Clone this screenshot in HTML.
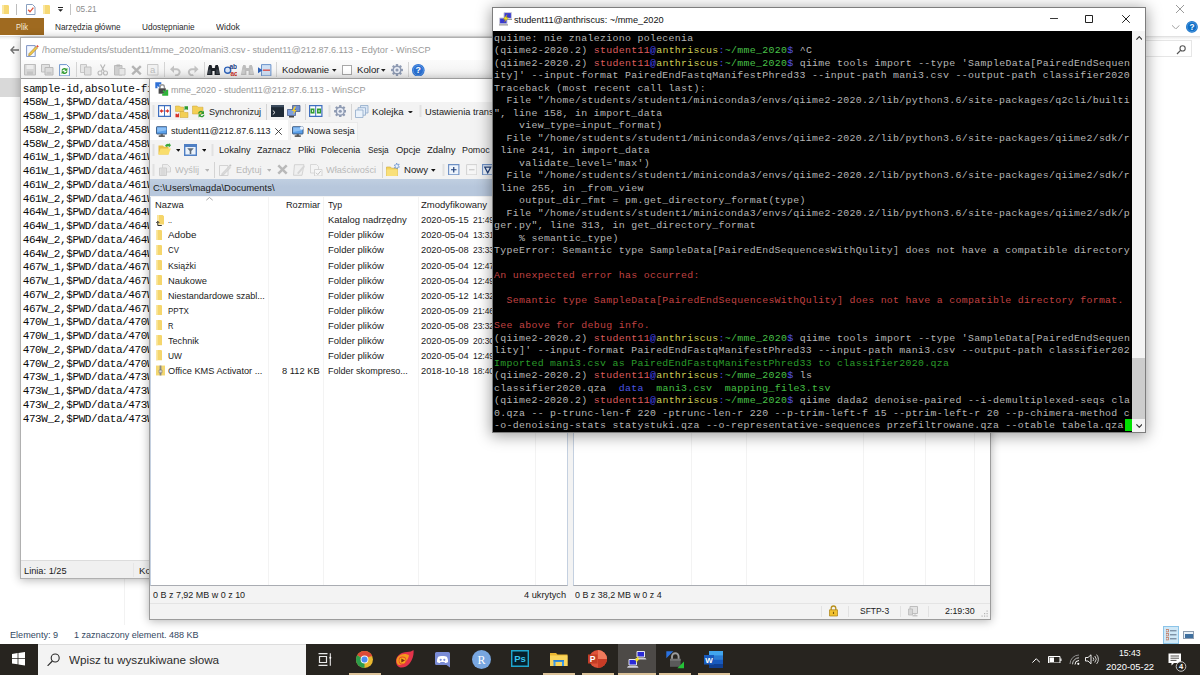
<!DOCTYPE html>
<html lang="pl">
<head>
<meta charset="utf-8">
<title>Pulpit - WinSCP / PuTTY</title>
<style>
html,body{margin:0;padding:0}
body{width:1200px;height:675px;overflow:hidden;position:relative;background:#fff;font-family:'Liberation Sans',sans-serif;font-size:9.4px}
div,span,svg,pre{position:absolute;box-sizing:border-box}
span{white-space:pre;transform-origin:0 50%}
pre{margin:0;font-family:'Liberation Mono',monospace;white-space:pre}
pre i{font-style:normal;position:static}
.w{overflow:hidden}
</style>
</head>
<body>
<div style="left:0px;top:0px;width:1200px;height:644px;background:#fff;"></div>
<svg style="left:1.5px;top:4.5px;" width="7.5" height="9.5" viewBox="0 0 7.5 9.5"><path d="M0 0h6l1.5 1.2V9.5H0z" fill="#f6d873"/><path d="M0 0h2v9.5H0z" fill="#fbe7a0"/></svg>
<div style="left:16px;top:4px;width:1px;height:10.5px;background:#bdbdbd;"></div>
<svg style="left:26px;top:3.5px;" width="9.5" height="11" viewBox="0 0 9.5 11"><path d="M.5.5h6l2.5 2.5v7.5H.5z" fill="#fff" stroke="#8aa0c0" stroke-width="1"/><path d="M2.2 5.8 4 7.8 7.4 3.6" fill="none" stroke="#e0523a" stroke-width="1.3"/></svg>
<svg style="left:42.5px;top:4.5px;" width="7.5" height="9.5" viewBox="0 0 7.5 9.5"><path d="M0 0h6l1.5 1.2V9.5H0z" fill="#f6d873"/><path d="M0 0h2v9.5H0z" fill="#fbe7a0"/></svg>
<svg style="left:57.8px;top:7.3px;" width="5" height="5" viewBox="0 0 5 5"><path d="M0 .5h5" stroke="#222" stroke-width="1"/><path d="M0 2.2h5L2.5 4.8z" fill="#222"/></svg>
<div style="left:70.3px;top:4px;width:1.2px;height:10.5px;background:#c4c4c4;"></div>
<span style="left:75.50px;top:3.40px;font-size:9.9px;line-height:12px;color:#8c8c8c;transform:scaleX(0.8334);">05.21</span>
<svg style="left:1176px;top:5px;" width="8" height="8" viewBox="0 0 8 8"><path d="M0 0 8 8M8 0 0 8" stroke="#9a9a9a" stroke-width="1" fill="none"/></svg>
<svg style="left:1172px;top:24.5px;" width="7.5" height="4.5" viewBox="0 0 7.5 4.5"><path d="M0 .3 3.75 4 7.5 .3" stroke="#a0a0a0" stroke-width="1" fill="none"/></svg>
<svg style="left:1186.1px;top:20.9px" width="11.8" height="11.8" viewBox="0 0 14 14"><circle cx="7" cy="7" r="7" fill="#0f6fc6"/><circle cx="7" cy="7" r="5.7" fill="none" stroke="#7fb4f0" stroke-width=".6"/><text x="7" y="10.4" font-size="9.8" font-weight="700" text-anchor="middle" fill="#fff" font-family="'Liberation Sans',sans-serif">?</text></svg>
<div style="left:0px;top:18px;width:43.5px;height:17.3px;background:#9f6a20;"></div>
<span style="left:15.50px;top:21.10px;font-size:9.9px;line-height:12px;color:#f7ead2;transform:scaleX(0.7600);">Plik</span>
<span style="left:54.50px;top:21.10px;font-size:9.9px;line-height:12px;color:#2a2a2a;transform:scaleX(0.8357);">Narzędzia główne</span>
<span style="left:141.50px;top:21.10px;font-size:9.9px;line-height:12px;color:#2a2a2a;transform:scaleX(0.8331);">Udostępnianie</span>
<span style="left:215.50px;top:21.10px;font-size:9.9px;line-height:12px;color:#2a2a2a;transform:scaleX(0.8711);">Widok</span>
<div style="left:0px;top:35.5px;width:1200px;height:1px;background:#e2e2e2;"></div>
<div style="left:0px;top:36.5px;width:1200px;height:3px;background:linear-gradient(#ececec,#fff);"></div>
<svg style="left:10.3px;top:46px;" width="9" height="8" viewBox="0 0 9 8"><path d="M9 4H1M4.300.500.800 4l3.500 3.500" stroke="#6f6f6f" stroke-width="1.300" fill="none"/></svg>
<div style="left:0px;top:77.5px;width:21px;height:19px;background:#d9d9d9;"></div>
<div style="left:1140px;top:40.4px;width:52px;height:17px;background:#fff;border:1px solid #e6e6e6"></div>
<svg style="left:1176px;top:45px;" width="10" height="10" viewBox="0 0 10 10"><circle cx="6.6" cy="3.4" r="2.6" fill="none" stroke="#555" stroke-width="1.1"/><path d="M4.8 5.2 1 9" stroke="#555" stroke-width="1.2"/></svg>
<div style="left:124px;top:40px;width:1px;height:585px;background:#f2f2f2;"></div>
<span style="left:10.00px;top:628.60px;font-size:9.9px;line-height:12px;color:#33475f;transform:scaleX(0.9222);">Elementy: 9</span>
<span style="left:73.50px;top:628.60px;font-size:9.9px;line-height:12px;color:#33475f;transform:scaleX(0.9152);">1 zaznaczony element. 488 KB</span>
<div style="left:1162.5px;top:626px;width:16px;height:17.5px;background:#cfe8f7;border:1px solid #8cc4e8"></div>
<svg style="left:1165.5px;top:629px;" width="11" height="12" viewBox="0 0 11 12"><rect x="0" y="0.5" width="2.4" height="2.4" fill="none" stroke="#c06a4a" stroke-width=".7"/><rect x="4" y="1.3" width="6.5" height="1" fill="#5c6f86"/><rect x="0" y="4.5" width="2.4" height="2.4" fill="none" stroke="#c06a4a" stroke-width=".7"/><rect x="4" y="5.3" width="6.5" height="1" fill="#5c6f86"/><rect x="0" y="8.5" width="2.4" height="2.4" fill="none" stroke="#c06a4a" stroke-width=".7"/><rect x="4" y="9.3" width="6.5" height="1" fill="#5c6f86"/></svg>
<div style="left:1183px;top:631px;width:11px;height:8px;background:#e9f1f8;border:1px solid #8d9db0"></div>
<div style="left:1184.5px;top:634px;width:8px;height:3.5px;background:#3f6f9f;"></div>
<div style="left:20px;top:37px;width:640px;height:541.5px;background:#fff;border:1px solid #b0b0b0;box-shadow:0 1px 9px rgba(0,0,0,.3)"></div>
<svg style="left:26px;top:43.5px;" width="13" height="13.5" viewBox="0 0 13 13.5"><path d="M.6 1.6h8.6v11H.6z" fill="#f4f8ff" stroke="#7d93c4" stroke-width="1"/><path d="M3 9.6 10 2.4l1.6 1.6L4.6 11.2 2.6 11.8z" fill="#f2c84a" stroke="#8a6a20" stroke-width=".5"/><path d="M10.2 2.2 11.4 1l1.4 1.4-1.2 1.2z" fill="#e0483a"/></svg>
<span style="left:41.50px;top:44.10px;font-size:9.9px;line-height:12px;color:#9a9a9a;transform:scaleX(0.9583);">/home/students/student11/mme_2020/mani3.csv</span>
<span style="left:247.10px;top:44.10px;font-size:9.9px;line-height:12px;color:#9a9a9a;transform:scaleX(0.9168);">- student11@212.87.6.113</span>
<span style="left:355.50px;top:44.10px;font-size:9.9px;line-height:12px;color:#9a9a9a;transform:scaleX(0.9247);">- Edytor - WinSCP</span>
<div style="left:21px;top:59.8px;width:638px;height:18px;background:linear-gradient(#fbfbfb,#f0f0f0);"></div>
<div style="left:21px;top:77.6px;width:638px;height:1px;background:#9c9c9c;"></div>
<svg style="left:24px;top:64px;" width="12" height="11.5" viewBox="0 0 12 11.5"><path d="M.5.5h11v10.5H.5z" fill="#d6d6d6" stroke="#bdbdbd"/><path d="M2.5 1h7v4h-7z" fill="#ececec"/><path d="M3 7.5h6v3.5H3z" fill="#c4c4c4"/></svg>
<svg style="left:41px;top:64px;" width="12.5" height="11.5" viewBox="0 0 12.5 11.5"><path d="M.5.5h8v7.5h-8z" fill="#e2e2e2" stroke="#bdbdbd"/><path d="M4 3.5h8v7.5H4z" fill="#dcdcdc" stroke="#b8b8b8"/><path d="M5.5 7.8h5v3h-5z" fill="#c8c8c8"/></svg>
<svg style="left:58.5px;top:63.5px;" width="11" height="12.5" viewBox="0 0 11 12.5"><path d="M.6.6h7l2.8 2.8v8.5H.6z" fill="#fdfeff" stroke="#6c93cc" stroke-width="1"/><path d="M2.4 6.4a3 3 0 0 1 5-1.6l1-1v3h-3l1-1a1.8 1.8 0 0 0-2.8.9zM8.6 7.6a3 3 0 0 1-5 1.6l-1 1v-3h3l-1 1a1.8 1.8 0 0 0 2.8-.9z" fill="#2f9a2f"/></svg>
<div style="left:75.5px;top:62px;width:1px;height:15px;background:#d4d4d4;"></div>
<svg style="left:80px;top:64px;" width="11.5" height="11.5" viewBox="0 0 11.5 11.5"><path d="M.5.5h6v8h-6z" fill="#e6e6e6" stroke="#c6c6c6"/><path d="M4.5 3h6.5v8H4.5z" fill="#e0e0e0" stroke="#c0c0c0"/></svg>
<svg style="left:97px;top:64px;" width="11.5" height="11.5" viewBox="0 0 11.5 11.5"><path d="M3.5.5 7 7M8 .5 4.5 7" stroke="#b8b8b8" stroke-width="1.2" fill="none"/><circle cx="3" cy="9" r="2" fill="none" stroke="#b8b8b8" stroke-width="1.1"/><circle cx="8.5" cy="9" r="2" fill="none" stroke="#b8b8b8" stroke-width="1.1"/></svg>
<svg style="left:114px;top:64px;" width="11.5" height="11.5" viewBox="0 0 11.5 11.5"><path d="M.5 1.5h7.5v9.5H.5z" fill="#cfcfcf" stroke="#bcbcbc"/><path d="M2.5.5h3.5v2H2.5z" fill="#b5b5b5"/><path d="M5 4.5h6v6.5H5z" fill="#e6e6e6" stroke="#c2c2c2"/></svg>
<svg style="left:131px;top:64.5px;" width="11" height="10.5" viewBox="0 0 11 10.5"><path d="M1.2 1.2 9.8 9.3M9.8 1.2 1.2 9.3" stroke="#b4b4b4" stroke-width="2.4" fill="none"/></svg>
<svg style="left:147px;top:64px;" width="11.5" height="11.5" viewBox="0 0 11.5 11.5"><path d="M.5.5h10.5v10.5H.5z" fill="#f1f1f1" stroke="#c9c9c9"/><text x="5.7" y="9.2" font-size="9.5" text-anchor="middle" fill="#bdbdbd" font-family="'Liberation Sans',sans-serif">a</text></svg>
<div style="left:164.3px;top:62px;width:1px;height:15px;background:#d4d4d4;"></div>
<svg style="left:170px;top:64px;" width="11.5" height="11.5" viewBox="0 0 11.5 11.5"><path d="M2.2 5.2h4a3 3 0 1 1-1 5.6" fill="none" stroke="#c2c2c2" stroke-width="2"/><path d="M0 5.2 4 1.4v7.6z" fill="#c2c2c2"/></svg>
<svg style="left:187px;top:64px;" width="11.5" height="11.5" viewBox="0 0 11.5 11.5"><path d="M9.3 5.2h-4a3 3 0 1 0 1 5.6" fill="none" stroke="#c2c2c2" stroke-width="2"/><path d="M11.5 5.2 7.5 1.4v7.6z" fill="#c2c2c2"/></svg>
<div style="left:204px;top:62px;width:1px;height:15px;background:#d4d4d4;"></div>
<svg style="left:207px;top:63.5px;" width="13" height="12" viewBox="0 0 13 12"><path d="M1.5 2.2h3.6V4h2.8V2.2h3.6L13 11H7.6V7H5.4v4H0z" fill="#1d2228"/><path d="M2 1h2.6v2H2zM8.4 1H11v2H8.4z" fill="#1d2228"/><path d="M1.4 5.5h2.4v4.5H1zM9.2 5.5h2.4L12 10H9.2z" fill="#59626d" opacity=".55"/></svg>
<svg style="left:224px;top:63.5px;" width="13" height="12.5" viewBox="0 0 13 12.5"><circle cx="3.6" cy="6.2" r="3.1" fill="#dbe6f7" stroke="#2e62b8" stroke-width="1.4"/><text x="5.5" y="5.3" font-size="6.5" font-weight="700" fill="#1d3f86" font-family="'Liberation Sans',sans-serif">ab</text><text x="6.5" y="12" font-size="6.5" font-weight="700" fill="#c8322a" font-family="'Liberation Sans',sans-serif">ac</text></svg>
<svg style="left:241px;top:63.5px;" width="13" height="12" viewBox="0 0 13 12"><path d="M1.5 2.2h3.6V4h2.8V2.2h3.6L13 11H7.6V7H5.4v4H0z" fill="#bdbdbd"/><path d="M2 1h2.6v2H2zM8.4 1H11v2H8.4z" fill="#bdbdbd"/><path d="M1.4 5.5h2.4v4.5H1zM9.2 5.5h2.4L12 10H9.2z" fill="#dadada" opacity=".55"/></svg>
<svg style="left:258px;top:63.5px;" width="13.5" height="12.5" viewBox="0 0 13.5 12.5"><path d="M3.5.6h9.4v11.3H3.5z" fill="#cfe0f4" stroke="#6c93cc" stroke-width="1"/><path d="M5 6.2h7" stroke="#d9534f" stroke-width="1.4"/><path d="M0 3.2 4.6 6.2 0 9.2z" fill="#2e62b8"/></svg>
<div style="left:276px;top:62px;width:1px;height:15px;background:#d4d4d4;"></div>
<span style="left:282.00px;top:64.40px;font-size:9.9px;line-height:12px;color:#1a1a1a;transform:scaleX(0.9637);">Kodowanie</span>
<svg style="left:332px;top:69.3px;" width="4.6" height="2.76" viewBox="0 0 10 6"><path d="M0 0h10L5 6z" fill="#222"/></svg>
<div style="left:342px;top:65.3px;width:9.6px;height:9.6px;background:#fff;border:1px solid #a8a8a8"></div>
<span style="left:356.50px;top:64.40px;font-size:9.9px;line-height:12px;color:#1a1a1a;transform:scaleX(0.9799);">Kolor</span>
<svg style="left:381px;top:69.3px;" width="4.6" height="2.76" viewBox="0 0 10 6"><path d="M0 0h10L5 6z" fill="#222"/></svg>
<svg style="left:390.5px;top:64px;" width="12" height="12" viewBox="0 0 12.4 12.4"><g fill="#8f9bb3"><rect x="5" y="0" width="2.4" height="12.4" rx=".6" transform="rotate(0 6.2 6.2)"/><rect x="5" y="0" width="2.4" height="12.4" rx=".6" transform="rotate(45 6.2 6.2)"/><rect x="5" y="0" width="2.4" height="12.4" rx=".6" transform="rotate(90 6.2 6.2)"/><rect x="5" y="0" width="2.4" height="12.4" rx=".6" transform="rotate(135 6.2 6.2)"/><circle cx="6.2" cy="6.2" r="4.6"/></g><circle cx="6.2" cy="6.2" r="3.2" fill="#e9edf5"/><circle cx="6.2" cy="6.2" r="1.6" fill="#8f9bb3"/></svg>
<div style="left:408px;top:62px;width:1px;height:15px;background:#d4d4d4;"></div>
<svg style="left:412.4px;top:63.9px" width="12.6" height="12.6" viewBox="0 0 14 14"><circle cx="7" cy="7" r="7" fill="#2a6fd1"/><circle cx="7" cy="7" r="5.7" fill="none" stroke="#7fb4f0" stroke-width=".6"/><text x="7" y="10.4" font-size="9.8" font-weight="700" text-anchor="middle" fill="#fff" font-family="'Liberation Sans',sans-serif">?</text></svg>
<pre style="left:22.7px;top:82.5px;font-size:11px;line-height:13.75px;letter-spacing:-0.385px;color:#0a0a0a">sample-id,absolute-filepath,direction
458W_1,$PWD/data/458W_1_R1.fastq.gz,forward
458W_1,$PWD/data/458W_1_R2.fastq.gz,reverse
458W_2,$PWD/data/458W_2_R1.fastq.gz,forward
458W_2,$PWD/data/458W_2_R2.fastq.gz,reverse
461W_1,$PWD/data/461W_1_R1.fastq.gz,forward
461W_1,$PWD/data/461W_1_R2.fastq.gz,reverse
461W_2,$PWD/data/461W_2_R1.fastq.gz,forward
461W_2,$PWD/data/461W_2_R2.fastq.gz,reverse
464W_1,$PWD/data/464W_1_R1.fastq.gz,forward
464W_1,$PWD/data/464W_1_R2.fastq.gz,reverse
464W_2,$PWD/data/464W_2_R1.fastq.gz,forward
464W_2,$PWD/data/464W_2_R2.fastq.gz,reverse
467W_1,$PWD/data/467W_1_R1.fastq.gz,forward
467W_1,$PWD/data/467W_1_R2.fastq.gz,reverse
467W_2,$PWD/data/467W_2_R1.fastq.gz,forward
467W_2,$PWD/data/467W_2_R2.fastq.gz,reverse
470W_1,$PWD/data/470W_1_R1.fastq.gz,forward
470W_1,$PWD/data/470W_1_R2.fastq.gz,reverse
470W_2,$PWD/data/470W_2_R1.fastq.gz,forward
470W_2,$PWD/data/470W_2_R2.fastq.gz,reverse
473W_1,$PWD/data/473W_1_R1.fastq.gz,forward
473W_1,$PWD/data/473W_1_R2.fastq.gz,reverse
473W_2,$PWD/data/473W_2_R1.fastq.gz,forward
473W_2,$PWD/data/473W_2_R2.fastq.gz,reverse</pre>
<div style="left:21px;top:560.3px;width:638px;height:17.7px;background:#f0f0f0;border-top:1px solid #dcdcdc"></div>
<div style="left:133px;top:563px;width:1px;height:14px;background:#e6e6e6;"></div>
<span style="left:23.50px;top:564.60px;font-size:9.9px;line-height:12px;color:#1a1a1a;transform:scaleX(0.9347);">Linia: 1/25</span>
<span style="left:138.50px;top:564.60px;font-size:9.9px;line-height:12px;color:#1a1a1a;transform:scaleX(0.9726);">Kolumna: 1</span>
<div style="left:149.3px;top:78px;width:842px;height:541.8px;background:#f3f3f3;border:1px solid #9c9c9c;box-shadow:0 1px 9px rgba(0,0,0,.3)"></div>
<div style="left:150.3px;top:79px;width:839.5px;height:22.5px;background:#fff;"></div>
<svg style="left:155px;top:82.3px;" width="13.5" height="14" viewBox="0 0 13.5 14"><path d="M.3.300h6v2.200H3.800L6 4.700 4.700 6 2.500 3.800V6.300H.3z" fill="#2d6fd6"/><path d="M5 6.500V5a2.200 2.200 0 0 1 4.400 0v1.500" fill="none" stroke="#9a9a9a" stroke-width="1.400"/><path d="M3.600 6.300h7.200v5.400H3.600z" fill="#4a4a4a"/><path d="M13.200 13.700h-6v-2.200h2.500L7.500 9.300 8.800 8l2.200 2.200V7.700h2.200z" fill="#2fb53a"/></svg>
<span style="left:171.00px;top:84.10px;font-size:9.9px;line-height:12px;color:#9a9a9a;transform:scaleX(0.9099);">mme_2020 - student11@212.87.6.113 - WinSCP</span>
<svg style="left:152.2px;top:105px;" width="3" height="12" viewBox="0 0 3 12"><rect x="0.5" y="0.5" width="2" height="1" fill="#cfcfcf"/><rect x="0.5" y="2.5" width="2" height="1" fill="#cfcfcf"/><rect x="0.5" y="4.5" width="2" height="1" fill="#cfcfcf"/><rect x="0.5" y="6.5" width="2" height="1" fill="#cfcfcf"/><rect x="0.5" y="8.5" width="2" height="1" fill="#cfcfcf"/><rect x="0.5" y="10.5" width="2" height="1" fill="#cfcfcf"/></svg>
<svg style="left:158px;top:105.2px;" width="13" height="12" viewBox="0 0 13 12"><path d="M.6.6h11.8v10.8H.6z" fill="#fff" stroke="#3f6fbf" stroke-width="1.2"/><path d="M6.5.6v10.8" stroke="#3f6fbf" stroke-width="1"/><path d="M1.6 6 4 4v1.3h1.5v1.4H4V8zM11.4 6 9 4v1.300H7.500v1.4H9V8z" fill="#d8322a"/></svg>
<svg style="left:175px;top:104.7px;" width="13.5" height="13" viewBox="0 0 13.5 13"><path d="M.5 1h4l1 1h3v4.500H.5z" fill="#f3cf55" stroke="#caa234" stroke-width=".5"/><path d="M5 6.500h4l1 1h3V12.500H5z" fill="#f3cf55" stroke="#caa234" stroke-width=".5"/><path d="M9.500 1.200h3.500v3.500h-1.300l-.7-.7-1.500 1.500z" fill="#2f9a2f"/><path d="M4 12.300H.5V8.800h1.300l.7.700 1.500-1.500z" fill="#d8322a"/></svg>
<svg style="left:192px;top:104.7px;" width="13.5" height="13" viewBox="0 0 13.5 13"><path d="M.5 1h4.500l1 1.200h5V9H.5z" fill="#f3cf55" stroke="#caa234" stroke-width=".5"/><path d="M6 8.400a3 3 0 0 1 5-1.700l1-1v3.200H8.800l1.200-1.200a1.700 1.700 0 0 0-2.600.8zM12.600 9.800a3 3 0 0 1-5 1.700l-1 1V9.300h3.200L8.600 10.500a1.700 1.700 0 0 0 2.600-.8z" fill="#2f9a2f"/></svg>
<span style="left:208.50px;top:105.80px;font-size:9.9px;line-height:12px;color:#1a1a1a;transform:scaleX(0.9214);">Synchronizuj</span>
<div style="left:266.3px;top:103.5px;width:1px;height:16px;background:#d4d4d4;"></div>
<svg style="left:270.5px;top:105.2px;" width="13" height="12" viewBox="0 0 13 12"><path d="M0 0h13v12H0z" fill="#1f2a36"/><path d="M0 0h13v2.200H0z" fill="#3d4c5e"/><path d="M1.800 5.500 4 7.500 1.800 9.500" stroke="#e8e8e8" stroke-width="1" fill="none"/></svg>
<svg style="left:287px;top:104.7px;" width="13.5" height="13" viewBox="0 0 13.5 13"><path d="M5.500.5h7.500v6H5.500z" fill="#6f8fd0" stroke="#4a5f8c" stroke-width=".8"/><path d="M.5 4.500h8v6H.5z" fill="#7fa0dc" stroke="#4a5f8c" stroke-width=".8"/><path d="M2 11h5v1.500H2z" fill="#444"/><path d="M7.500 1.500 5 6h2l-1 3.500 3.500-4.500h-2l1.500-3.500z" fill="#f5cf2a"/></svg>
<div style="left:305.3px;top:103.5px;width:1px;height:16px;background:#d4d4d4;"></div>
<svg style="left:309px;top:105.2px;" width="13.5" height="12" viewBox="0 0 13.5 12"><path d="M.6.6h12.300v10.800H.6z" fill="#fff" stroke="#3f6fbf" stroke-width="1.200"/><path d="M6.700.6v10.800" stroke="#3f6fbf" stroke-width="1"/><path d="M1.500 3.500h4v5h-4zM8 3.500h4v5H8z" fill="#2f9a2f"/><path d="M4.500 6 3 4.800v2.400zM9 6l1.500-1.200v2.400z" fill="#fff"/></svg>
<svg style="left:327.8px;top:105px;" width="3" height="12" viewBox="0 0 3 12"><rect x="0.5" y="0.5" width="2" height="1" fill="#cfcfcf"/><rect x="0.5" y="2.5" width="2" height="1" fill="#cfcfcf"/><rect x="0.5" y="4.5" width="2" height="1" fill="#cfcfcf"/><rect x="0.5" y="6.5" width="2" height="1" fill="#cfcfcf"/><rect x="0.5" y="8.5" width="2" height="1" fill="#cfcfcf"/><rect x="0.5" y="10.5" width="2" height="1" fill="#cfcfcf"/></svg>
<svg style="left:333.8px;top:104.8px;" width="12.5" height="12.5" viewBox="0 0 12.4 12.4"><g fill="#8f9bb3"><rect x="5" y="0" width="2.4" height="12.4" rx=".6" transform="rotate(0 6.2 6.2)"/><rect x="5" y="0" width="2.4" height="12.4" rx=".6" transform="rotate(45 6.2 6.2)"/><rect x="5" y="0" width="2.4" height="12.4" rx=".6" transform="rotate(90 6.2 6.2)"/><rect x="5" y="0" width="2.4" height="12.4" rx=".6" transform="rotate(135 6.2 6.2)"/><circle cx="6.2" cy="6.2" r="4.6"/></g><circle cx="6.2" cy="6.2" r="3.2" fill="#e9edf5"/><circle cx="6.2" cy="6.2" r="1.6" fill="#8f9bb3"/></svg>
<div style="left:351.3px;top:103.5px;width:1px;height:16px;background:#d4d4d4;"></div>
<svg style="left:355px;top:104.7px;" width="13.5" height="13" viewBox="0 0 13.5 13"><path d="M5.500.5h7.500v7.500H5.500z" fill="#dbe7f5" stroke="#8fa9c9" stroke-width=".8"/><path d="M3 2.700h7.500v7.500H3z" fill="#e3edf8" stroke="#8fa9c9" stroke-width=".8"/><path d="M.5 5h7.500v7.500H.5z" fill="#eaf2fb" stroke="#8fa9c9" stroke-width=".8"/></svg>
<span style="left:372.00px;top:105.80px;font-size:9.9px;line-height:12px;color:#1a1a1a;transform:scaleX(0.9756);">Kolejka</span>
<svg style="left:408.3px;top:110.5px;" width="4.8" height="2.88" viewBox="0 0 10 6"><path d="M0 0h10L5 6z" fill="#222"/></svg>
<svg style="left:419px;top:105px;" width="3" height="12" viewBox="0 0 3 12"><rect x="0.5" y="0.5" width="2" height="1" fill="#cfcfcf"/><rect x="0.5" y="2.5" width="2" height="1" fill="#cfcfcf"/><rect x="0.5" y="4.5" width="2" height="1" fill="#cfcfcf"/><rect x="0.5" y="6.5" width="2" height="1" fill="#cfcfcf"/><rect x="0.5" y="8.5" width="2" height="1" fill="#cfcfcf"/><rect x="0.5" y="10.5" width="2" height="1" fill="#cfcfcf"/></svg>
<span style="left:424.50px;top:105.80px;font-size:9.9px;line-height:12px;color:#1a1a1a;transform:scaleX(0.9398);">Ustawienia transferu</span>
<div style="left:150.3px;top:120.2px;width:138px;height:19.5px;background:#fff;"></div>
<div style="left:289.5px;top:121.5px;width:68.5px;height:18px;background:#f8f8f8;border:1px solid #eaeaea;border-bottom:0"></div>
<svg style="left:155.5px;top:125.5px;" width="11.5" height="11" viewBox="0 0 12 11"><rect x=".5" y=".5" width="11" height="7.6" rx=".6" fill="#5aa0ea" stroke="#3d5a80" stroke-width="1"/><path d="M1.3 1.3h9.4v3L1.3 6z" fill="#8cc0f5"/><path d="M4.8 8.4h2.4v1.4H4.8z" fill="#4a4a4a"/><path d="M2.8 9.6h6.4V11H2.8z" fill="#333"/></svg>
<span style="left:171.00px;top:125.10px;font-size:9.9px;line-height:12px;color:#1a1a1a;transform:scaleX(0.9088);">student11@212.87.6.113</span>
<svg style="left:275.2px;top:127.5px;" width="7" height="7" viewBox="0 0 7 7"><path d="M.3.300 6.700 6.700M6.700.300.3 6.700" stroke="#333" stroke-width=".9" fill="none"/></svg>
<svg style="left:292px;top:125.5px;" width="11.5" height="11" viewBox="0 0 12 11"><rect x=".5" y=".5" width="11" height="7.6" rx=".6" fill="#5aa0ea" stroke="#3d5a80" stroke-width="1"/><path d="M1.3 1.3h9.4v3L1.3 6z" fill="#8cc0f5"/><path d="M4.8 8.4h2.4v1.4H4.8z" fill="#4a4a4a"/><path d="M2.8 9.6h6.4V11H2.8z" fill="#333"/><circle cx="10.2" cy="1.8" r="1.9" fill="#e8f2ff"/></svg>
<span style="left:307.00px;top:125.10px;font-size:9.9px;line-height:12px;color:#1a1a1a;transform:scaleX(0.9325);">Nowa sesja</span>
<svg style="left:152.2px;top:144px;" width="3" height="12" viewBox="0 0 3 12"><rect x="0.5" y="0.5" width="2" height="1" fill="#cfcfcf"/><rect x="0.5" y="2.5" width="2" height="1" fill="#cfcfcf"/><rect x="0.5" y="4.5" width="2" height="1" fill="#cfcfcf"/><rect x="0.5" y="6.5" width="2" height="1" fill="#cfcfcf"/><rect x="0.5" y="8.5" width="2" height="1" fill="#cfcfcf"/><rect x="0.5" y="10.5" width="2" height="1" fill="#cfcfcf"/></svg>
<svg style="left:158px;top:143.3px;" width="13" height="12" viewBox="0 0 13 12"><path d="M.5 2.500h4.500l1 1.200h4.500V11.500H.5z" fill="#e7bf45"/><path d="M2.500 5.500h10.300L10.500 11.500H.5z" fill="#f9dd6c"/><path d="M7 2.800a3.500 3.500 0 0 1 4-1.800V0l2 2.200-2 2.200v-1a2.500 2.500 0 0 0-2.500.6z" fill="#3aa83a"/></svg>
<svg style="left:175.8px;top:148.8px;" width="4.6" height="2.76" viewBox="0 0 10 6"><path d="M0 0h10L5 6z" fill="#111"/></svg>
<svg style="left:184px;top:143.5px;" width="13" height="12" viewBox="0 0 13 12"><path d="M.7.700h11.600v10.600H.7z" fill="#eaf2fb" stroke="#4f7fc4" stroke-width="1.400"/><path d="M.7.700h11.600V3H.7z" fill="#4f7fc4"/><path d="M3.200 4.200h6.600L7.300 7v3H5.700V7z" fill="#5f6b7a"/></svg>
<svg style="left:201.5px;top:148.8px;" width="4.6" height="2.76" viewBox="0 0 10 6"><path d="M0 0h10L5 6z" fill="#111"/></svg>
<svg style="left:211.3px;top:144px;" width="3" height="12" viewBox="0 0 3 12"><rect x="0.5" y="0.5" width="2" height="1" fill="#cfcfcf"/><rect x="0.5" y="2.5" width="2" height="1" fill="#cfcfcf"/><rect x="0.5" y="4.5" width="2" height="1" fill="#cfcfcf"/><rect x="0.5" y="6.5" width="2" height="1" fill="#cfcfcf"/><rect x="0.5" y="8.5" width="2" height="1" fill="#cfcfcf"/><rect x="0.5" y="10.5" width="2" height="1" fill="#cfcfcf"/></svg>
<span style="left:218.50px;top:144.10px;font-size:9.9px;line-height:12px;color:#1a1a1a;transform:scaleX(0.9281);">Lokalny</span>
<span style="left:256.50px;top:144.10px;font-size:9.9px;line-height:12px;color:#1a1a1a;transform:scaleX(0.9135);">Zaznacz</span>
<span style="left:297.50px;top:144.10px;font-size:9.9px;line-height:12px;color:#1a1a1a;transform:scaleX(0.9443);">Pliki</span>
<span style="left:321.00px;top:144.10px;font-size:9.9px;line-height:12px;color:#1a1a1a;transform:scaleX(0.9014);">Polecenia</span>
<span style="left:367.50px;top:144.10px;font-size:9.9px;line-height:12px;color:#1a1a1a;transform:scaleX(0.8339);">Sesja</span>
<span style="left:395.50px;top:144.10px;font-size:9.9px;line-height:12px;color:#1a1a1a;transform:scaleX(0.9536);">Opcje</span>
<span style="left:426.50px;top:144.10px;font-size:9.9px;line-height:12px;color:#1a1a1a;transform:scaleX(0.9649);">Zdalny</span>
<span style="left:461.50px;top:144.10px;font-size:9.9px;line-height:12px;color:#1a1a1a;transform:scaleX(0.8980);">Pomoc</span>
<svg style="left:152.2px;top:163.5px;" width="3" height="12" viewBox="0 0 3 12"><rect x="0.5" y="0.5" width="2" height="1" fill="#cfcfcf"/><rect x="0.5" y="2.5" width="2" height="1" fill="#cfcfcf"/><rect x="0.5" y="4.5" width="2" height="1" fill="#cfcfcf"/><rect x="0.5" y="6.5" width="2" height="1" fill="#cfcfcf"/><rect x="0.5" y="8.5" width="2" height="1" fill="#cfcfcf"/><rect x="0.5" y="10.5" width="2" height="1" fill="#cfcfcf"/></svg>
<svg style="left:158.5px;top:163.5px;" width="12" height="12" viewBox="0 0 12 12"><path d="M3.500.5h5l3 3V8H3.500z" fill="#ececec" stroke="#cdcdcd" stroke-width=".8"/><path d="M.5 4h7v7.500H.5z" fill="#e2e2e2" stroke="#c6c6c6" stroke-width=".8"/><path d="M1.800 6h4.400M1.800 8h4.400M1.800 10h4.400" stroke="#c9c9c9" stroke-width=".7"/></svg>
<span style="left:175.00px;top:163.80px;font-size:9.9px;line-height:12px;color:#b9b9b9;transform:scaleX(0.9376);">Wyślij</span>
<svg style="left:204.8px;top:168.8px;" width="4.6" height="2.76" viewBox="0 0 10 6"><path d="M0 0h10L5 6z" fill="#b5b5b5"/></svg>
<div style="left:213.8px;top:161.5px;width:1px;height:16px;background:#d4d4d4;"></div>
<svg style="left:219px;top:163.5px;" width="12.5" height="12" viewBox="0 0 12.5 12"><path d="M.5 1.500h8.500v10H.5z" fill="#f3f3f3" stroke="#cfcfcf" stroke-width=".9"/><path d="M3 9.500 10 2.300l1.500 1.500L4.500 11l-2 .5z" fill="#d9d9d9" stroke="#c0c0c0" stroke-width=".5"/><circle cx="11.300" cy="1.500" r="1.100" fill="#c4c4c4"/></svg>
<span style="left:235.50px;top:163.80px;font-size:9.9px;line-height:12px;color:#b9b9b9;transform:scaleX(0.9325);">Edytuj</span>
<svg style="left:266.8px;top:168.8px;" width="4.6" height="2.76" viewBox="0 0 10 6"><path d="M0 0h10L5 6z" fill="#b5b5b5"/></svg>
<svg style="left:276.8px;top:164px;" width="11" height="11" viewBox="0 0 11 11"><path d="M1.300 1.300 9.700 9.700M9.700 1.300 1.300 9.700" stroke="#b9b9b9" stroke-width="2.500" fill="none"/></svg>
<svg style="left:293px;top:163.5px;" width="12.5" height="12" viewBox="0 0 12.5 12"><path d="M1.500.7h9.500L9 11.300H.5z" fill="#f0f0f0" stroke="#cfcfcf" stroke-width=".9"/><path d="M4 9 10.500 1.500 12 2.800 5.500 10.200z" fill="#d6d6d6"/></svg>
<svg style="left:310px;top:163.5px;" width="12.5" height="12.5" viewBox="0 0 12.5 12.5"><path d="M.5.5h6l2 2V9H.5z" fill="#f4f4f4" stroke="#d0d0d0" stroke-width=".8"/><path d="M4.500 5.500h7.500V12H4.500z" fill="#f7f7f7" stroke="#cdcdcd" stroke-width=".8"/><path d="M6 8.800 7.800 10.600 10.800 7" fill="none" stroke="#c2c2c2" stroke-width="1"/></svg>
<span style="left:326.00px;top:163.80px;font-size:9.9px;line-height:12px;color:#b9b9b9;transform:scaleX(0.9316);">Właściwości</span>
<div style="left:381.8px;top:161.5px;width:1px;height:16px;background:#d4d4d4;"></div>
<svg style="left:386px;top:162.5px;" width="13.5" height="13.5" viewBox="0 0 13.5 13.5"><path d="M.5 4h4l1 1.200h6V13H.5z" fill="#f4d35a" stroke="#d0a936" stroke-width=".6"/><path d="M.5 6.500h11V13H.5z" fill="#f9e07a"/><path d="M10.700 0 11.400 1.700 13.200 1.200 12.300 2.800 13.500 4.200 11.700 4.300 11.200 6 10.100 4.600 8.400 5.100 9.300 3.500 8.200 2.100 10 2z" fill="#e8f1ff" stroke="#4f7fc4" stroke-width=".6"/></svg>
<span style="left:403.50px;top:163.80px;font-size:9.9px;line-height:12px;color:#1a1a1a;transform:scaleX(0.9756);">Nowy</span>
<svg style="left:431px;top:168.8px;" width="4.6" height="2.76" viewBox="0 0 10 6"><path d="M0 0h10L5 6z" fill="#111"/></svg>
<svg style="left:442px;top:163.5px;" width="3" height="12" viewBox="0 0 3 12"><rect x="0.5" y="0.5" width="2" height="1" fill="#cfcfcf"/><rect x="0.5" y="2.5" width="2" height="1" fill="#cfcfcf"/><rect x="0.5" y="4.5" width="2" height="1" fill="#cfcfcf"/><rect x="0.5" y="6.5" width="2" height="1" fill="#cfcfcf"/><rect x="0.5" y="8.5" width="2" height="1" fill="#cfcfcf"/><rect x="0.5" y="10.5" width="2" height="1" fill="#cfcfcf"/></svg>
<svg style="left:448px;top:163.5px;" width="11.5" height="11.5" viewBox="0 0 11.5 11.5"><path d="M.6.600h10.300v10.300H.6z" fill="#eef4fc" stroke="#6c8fc4" stroke-width="1.100"/><path d="M3 5.750h5.500M5.750 3v5.500" stroke="#1f3f7a" stroke-width="1.200"/></svg>
<svg style="left:465.5px;top:163.5px;" width="11.5" height="11.5" viewBox="0 0 11.5 11.5"><path d="M.6.600h10.300v10.300H.6z" fill="#f6f6f6" stroke="#d2d2d2" stroke-width="1"/><path d="M3 5.750h5.500" stroke="#c6c6c6" stroke-width="1.100"/></svg>
<svg style="left:482px;top:163.5px;" width="11.5" height="11.5" viewBox="0 0 11.5 11.5"><path d="M.6.600h10.300v10.300H.6z" fill="#eef4fc" stroke="#6c8fc4" stroke-width="1.100"/><path d="M2.800 3.200h5.900L5.750 8.800z" fill="none" stroke="#1f3f7a" stroke-width="1.300"/></svg>
<div style="left:150.3px;top:178.8px;width:417px;height:17.7px;background:linear-gradient(#c0cfe1,#b7c7dc 45%);"></div>
<div style="left:572.5px;top:178.8px;width:417.8px;height:17.7px;background:linear-gradient(#c0cfe1,#b7c7dc 45%);"></div>
<span style="left:152.50px;top:181.60px;font-size:9.9px;line-height:12px;color:#1a1a1a;transform:scaleX(0.9591);">C:\Users\magda\Documents\</span>
<div style="left:150.3px;top:196.5px;width:417.5px;height:389.2px;background:#fff;border:1px solid #c4d0e0;border-top:0;border-bottom-color:#a9acb2"></div>
<div style="left:268px;top:197px;width:1px;height:388px;background:#f3f3f3;"></div>
<div style="left:323px;top:197px;width:1px;height:388px;background:#f3f3f3;"></div>
<div style="left:417.5px;top:197px;width:1px;height:388px;background:#f3f3f3;"></div>
<div style="left:534.5px;top:197px;width:1px;height:388px;background:#f3f3f3;"></div>
<svg style="left:206px;top:197.3px;" width="7" height="3.5" viewBox="0 0 7 3.5"><path d="M.3 3.200 3.500.500 6.700 3.200" stroke="#8f8f8f" stroke-width=".8" fill="none"/></svg>
<span style="left:154.50px;top:199.10px;font-size:9.9px;line-height:12px;color:#1a1a1a;transform:scaleX(0.9474);">Nazwa</span>
<span style="left:285.50px;top:199.10px;font-size:9.9px;line-height:12px;color:#1a1a1a;transform:scaleX(0.9275);">Rozmiar</span>
<span style="left:327.50px;top:199.10px;font-size:9.9px;line-height:12px;color:#1a1a1a;transform:scaleX(0.8856);">Typ</span>
<span style="left:421.00px;top:199.10px;font-size:9.9px;line-height:12px;color:#1a1a1a;transform:scaleX(0.9634);">Zmodyfikowany</span>
<svg style="left:155.8px;top:215.3px;" width="8" height="11.5" viewBox="0 0 8 11.5"><path d="M1.200 0h5.500L8 1.300V9.500H1.200z" fill="#f5d56a"/><path d="M1.200 0H3v9.500H1.200z" fill="#fae6a0"/><path d="M1.800 10.500V6.500M.3 8 1.800 6.300 3.300 8M1.800 10.500h4" stroke="#333" stroke-width="1" fill="none"/></svg>
<span style="left:167.70px;top:214.40px;font-size:9.9px;line-height:12px;color:#1a1a1a;transform:scaleX(0.7091);">..</span>
<span style="left:327.80px;top:214.40px;font-size:9.9px;line-height:12px;color:#1a1a1a;transform:scaleX(0.9568);">Katalog nadrzędny</span>
<span style="left:421.00px;top:214.40px;font-size:9.9px;line-height:12px;color:#1a1a1a;transform:scaleX(0.9423);">2020-05-15</span>
<span style="left:472.50px;top:214.40px;font-size:9.9px;line-height:12px;color:#1a1a1a;transform:scaleX(0.8478);">21:49:09</span>
<svg style="left:156px;top:230.04px;" width="6.4" height="10.2" viewBox="0 0 6.4 10.2"><path d="M0 0h5.200L6.400 1.200V10.200H0z" fill="#f5d66c"/><path d="M0 0h1.700v10.200H0z" fill="#fae7a4"/></svg>
<span style="left:167.70px;top:229.44px;font-size:9.9px;line-height:12px;color:#1a1a1a;transform:scaleX(0.9943);">Adobe</span>
<span style="left:327.80px;top:229.44px;font-size:9.9px;line-height:12px;color:#1a1a1a;transform:scaleX(0.9590);">Folder plików</span>
<span style="left:421.00px;top:229.44px;font-size:9.9px;line-height:12px;color:#1a1a1a;transform:scaleX(0.9423);">2020-05-04</span>
<span style="left:472.50px;top:229.44px;font-size:9.9px;line-height:12px;color:#1a1a1a;transform:scaleX(0.8478);">13:31:12</span>
<svg style="left:156px;top:245.08px;" width="6.4" height="10.2" viewBox="0 0 6.4 10.2"><path d="M0 0h5.200L6.400 1.200V10.200H0z" fill="#f5d66c"/><path d="M0 0h1.700v10.200H0z" fill="#fae7a4"/></svg>
<span style="left:167.70px;top:244.48px;font-size:9.9px;line-height:12px;color:#1a1a1a;transform:scaleX(0.7945);">CV</span>
<span style="left:327.80px;top:244.48px;font-size:9.9px;line-height:12px;color:#1a1a1a;transform:scaleX(0.9590);">Folder plików</span>
<span style="left:421.00px;top:244.48px;font-size:9.9px;line-height:12px;color:#1a1a1a;transform:scaleX(0.9423);">2020-05-08</span>
<span style="left:472.50px;top:244.48px;font-size:9.9px;line-height:12px;color:#1a1a1a;transform:scaleX(0.8478);">23:33:47</span>
<svg style="left:156px;top:260.12px;" width="6.4" height="10.2" viewBox="0 0 6.4 10.2"><path d="M0 0h5.200L6.400 1.200V10.200H0z" fill="#f5d66c"/><path d="M0 0h1.700v10.200H0z" fill="#fae7a4"/></svg>
<span style="left:167.70px;top:259.52px;font-size:9.9px;line-height:12px;color:#1a1a1a;transform:scaleX(0.8919);">Książki</span>
<span style="left:327.80px;top:259.52px;font-size:9.9px;line-height:12px;color:#1a1a1a;transform:scaleX(0.9590);">Folder plików</span>
<span style="left:421.00px;top:259.52px;font-size:9.9px;line-height:12px;color:#1a1a1a;transform:scaleX(0.9423);">2020-05-04</span>
<span style="left:472.50px;top:259.52px;font-size:9.9px;line-height:12px;color:#1a1a1a;transform:scaleX(0.8478);">12:47:30</span>
<svg style="left:156px;top:275.16px;" width="6.4" height="10.2" viewBox="0 0 6.4 10.2"><path d="M0 0h5.200L6.400 1.200V10.200H0z" fill="#f5d66c"/><path d="M0 0h1.700v10.200H0z" fill="#fae7a4"/></svg>
<span style="left:167.70px;top:274.56px;font-size:9.9px;line-height:12px;color:#1a1a1a;transform:scaleX(0.9448);">Naukowe</span>
<span style="left:327.80px;top:274.56px;font-size:9.9px;line-height:12px;color:#1a1a1a;transform:scaleX(0.9590);">Folder plików</span>
<span style="left:421.00px;top:274.56px;font-size:9.9px;line-height:12px;color:#1a1a1a;transform:scaleX(0.9423);">2020-05-04</span>
<span style="left:472.50px;top:274.56px;font-size:9.9px;line-height:12px;color:#1a1a1a;transform:scaleX(0.8478);">12:49:02</span>
<svg style="left:156px;top:290.2px;" width="6.4" height="10.2" viewBox="0 0 6.4 10.2"><path d="M0 0h5.200L6.400 1.200V10.200H0z" fill="#f5d66c"/><path d="M0 0h1.700v10.200H0z" fill="#fae7a4"/></svg>
<span style="left:167.70px;top:289.60px;font-size:9.9px;line-height:12px;color:#1a1a1a;transform:scaleX(0.9194);">Niestandardowe szabl...</span>
<span style="left:327.80px;top:289.60px;font-size:9.9px;line-height:12px;color:#1a1a1a;transform:scaleX(0.9590);">Folder plików</span>
<span style="left:421.00px;top:289.60px;font-size:9.9px;line-height:12px;color:#1a1a1a;transform:scaleX(0.9423);">2020-05-12</span>
<span style="left:472.50px;top:289.60px;font-size:9.9px;line-height:12px;color:#1a1a1a;transform:scaleX(0.8478);">14:32:18</span>
<svg style="left:156px;top:305.24px;" width="6.4" height="10.2" viewBox="0 0 6.4 10.2"><path d="M0 0h5.200L6.400 1.200V10.200H0z" fill="#f5d66c"/><path d="M0 0h1.700v10.200H0z" fill="#fae7a4"/></svg>
<span style="left:167.70px;top:304.64px;font-size:9.9px;line-height:12px;color:#1a1a1a;transform:scaleX(0.8102);">PPTX</span>
<span style="left:327.80px;top:304.64px;font-size:9.9px;line-height:12px;color:#1a1a1a;transform:scaleX(0.9590);">Folder plików</span>
<span style="left:421.00px;top:304.64px;font-size:9.9px;line-height:12px;color:#1a1a1a;transform:scaleX(0.9423);">2020-05-09</span>
<span style="left:472.50px;top:304.64px;font-size:9.9px;line-height:12px;color:#1a1a1a;transform:scaleX(0.8478);">21:46:55</span>
<svg style="left:156px;top:320.28px;" width="6.4" height="10.2" viewBox="0 0 6.4 10.2"><path d="M0 0h5.200L6.400 1.200V10.200H0z" fill="#f5d66c"/><path d="M0 0h1.700v10.200H0z" fill="#fae7a4"/></svg>
<span style="left:167.70px;top:319.68px;font-size:9.9px;line-height:12px;color:#1a1a1a;transform:scaleX(0.7562);">R</span>
<span style="left:327.80px;top:319.68px;font-size:9.9px;line-height:12px;color:#1a1a1a;transform:scaleX(0.9590);">Folder plików</span>
<span style="left:421.00px;top:319.68px;font-size:9.9px;line-height:12px;color:#1a1a1a;transform:scaleX(0.9423);">2020-05-08</span>
<span style="left:472.50px;top:319.68px;font-size:9.9px;line-height:12px;color:#1a1a1a;transform:scaleX(0.8478);">23:32:40</span>
<svg style="left:156px;top:335.32px;" width="6.4" height="10.2" viewBox="0 0 6.4 10.2"><path d="M0 0h5.200L6.400 1.200V10.200H0z" fill="#f5d66c"/><path d="M0 0h1.700v10.200H0z" fill="#fae7a4"/></svg>
<span style="left:167.70px;top:334.72px;font-size:9.9px;line-height:12px;color:#1a1a1a;transform:scaleX(0.9228);">Technik</span>
<span style="left:327.80px;top:334.72px;font-size:9.9px;line-height:12px;color:#1a1a1a;transform:scaleX(0.9590);">Folder plików</span>
<span style="left:421.00px;top:334.72px;font-size:9.9px;line-height:12px;color:#1a1a1a;transform:scaleX(0.9423);">2020-05-09</span>
<span style="left:472.50px;top:334.72px;font-size:9.9px;line-height:12px;color:#1a1a1a;transform:scaleX(0.8478);">20:30:21</span>
<svg style="left:156px;top:350.36px;" width="6.4" height="10.2" viewBox="0 0 6.4 10.2"><path d="M0 0h5.200L6.400 1.200V10.200H0z" fill="#f5d66c"/><path d="M0 0h1.700v10.200H0z" fill="#fae7a4"/></svg>
<span style="left:167.70px;top:349.76px;font-size:9.9px;line-height:12px;color:#1a1a1a;transform:scaleX(0.8448);">UW</span>
<span style="left:327.80px;top:349.76px;font-size:9.9px;line-height:12px;color:#1a1a1a;transform:scaleX(0.9590);">Folder plików</span>
<span style="left:421.00px;top:349.76px;font-size:9.9px;line-height:12px;color:#1a1a1a;transform:scaleX(0.9423);">2020-05-04</span>
<span style="left:472.50px;top:349.76px;font-size:9.9px;line-height:12px;color:#1a1a1a;transform:scaleX(0.8478);">12:49:37</span>
<svg style="left:156px;top:365.2px;" width="9" height="11" viewBox="0 0 10 11"><path d="M0 0h10v11H0z" fill="#f3d772"/><path d="M4 0h2v11H4z" fill="#8a8a8a"/><path d="M3.3 5h3.4v3H3.3z" fill="#d9d9d9" stroke="#666" stroke-width=".5"/></svg>
<span style="left:167.70px;top:364.80px;font-size:9.9px;line-height:12px;color:#1a1a1a;transform:scaleX(0.9315);">Office KMS Activator ...</span>
<span style="left:281.50px;top:364.80px;font-size:9.9px;line-height:12px;color:#1a1a1a;transform:scaleX(0.9422);">8 112 KB</span>
<span style="left:327.80px;top:364.80px;font-size:9.9px;line-height:12px;color:#1a1a1a;transform:scaleX(0.9144);">Folder skompreso...</span>
<span style="left:421.00px;top:364.80px;font-size:9.9px;line-height:12px;color:#1a1a1a;transform:scaleX(0.9423);">2018-10-18</span>
<span style="left:472.50px;top:364.80px;font-size:9.9px;line-height:12px;color:#1a1a1a;transform:scaleX(0.8478);">18:40:26</span>
<div style="left:572.5px;top:196.5px;width:417.8px;height:389.2px;background:#fff;border:1px solid #c4d0e0;border-top:0;border-right:0;border-bottom-color:#a9acb2"></div>
<div style="left:691px;top:197px;width:1px;height:388px;background:#f3f3f3;"></div>
<div style="left:745.7px;top:197px;width:1px;height:388px;background:#f3f3f3;"></div>
<div style="left:863.3px;top:197px;width:1px;height:388px;background:#f3f3f3;"></div>
<div style="left:925px;top:197px;width:1px;height:388px;background:#f3f3f3;"></div>
<div style="left:974.2px;top:197px;width:1px;height:388px;background:#f3f3f3;"></div>
<span style="left:152.50px;top:588.90px;font-size:9.9px;line-height:12px;color:#1a1a1a;transform:scaleX(0.9070);">0 B z 7,92 MB w 0 z 10</span>
<span style="left:523.50px;top:588.90px;font-size:9.9px;line-height:12px;color:#1a1a1a;transform:scaleX(0.9352);">4 ukrytych</span>
<span style="left:574.50px;top:588.90px;font-size:9.9px;line-height:12px;color:#1a1a1a;transform:scaleX(0.9015);">0 B z 38,2 MB w 0 z 4</span>
<div style="left:150.3px;top:603.3px;width:840px;height:1px;background:#e4e4e4;"></div>
<div style="left:821px;top:605.5px;width:1px;height:11.5px;background:#e2e2e2;"></div>
<div style="left:848px;top:605.5px;width:1px;height:11.5px;background:#e2e2e2;"></div>
<div style="left:900px;top:605.5px;width:1px;height:11.5px;background:#e2e2e2;"></div>
<div style="left:928px;top:605.5px;width:1px;height:11.5px;background:#e2e2e2;"></div>
<svg style="left:829px;top:605.3px;" width="9" height="11.5" viewBox="0 0 9 11.5"><path d="M2.200 5V3.300a2.300 2.300 0 0 1 4.600 0V5" fill="none" stroke="#b8901c" stroke-width="1.300"/><path d="M.5 4.800h8v6.200h-8z" fill="#f2c230" stroke="#a87f14" stroke-width=".7"/><path d="M4.500 6.800v2.200" stroke="#7a5a0a" stroke-width="1.100"/></svg>
<span style="left:860.00px;top:605.30px;font-size:9.9px;line-height:12px;color:#1a1a1a;transform:scaleX(0.8551);">SFTP-3</span>
<svg style="left:908px;top:605.5px;" width="12" height="11.5" viewBox="0 0 12 11.5"><path d="M2 .5h7.500v7H2z" fill="#e4e4e4" stroke="#b9b9b9" stroke-width=".9"/><path d="M.5 3h4v6h-4z" fill="#d6d6d6" stroke="#b5b5b5" stroke-width=".7"/><path d="M4.500 9.500h5M7 8v1.500M4.500 11h5" stroke="#bdbdbd" stroke-width=".8"/></svg>
<span style="left:944.50px;top:605.30px;font-size:9.9px;line-height:12px;color:#1a1a1a;transform:scaleX(0.8982);">2:19:30</span>
<svg style="left:981px;top:610px;" width="8" height="8" viewBox="0 0 8 8"><rect x="5.5" y="5.5" width="1.200" height="1.200" fill="#b4b4b4"/><rect x="3" y="5.5" width="1.200" height="1.200" fill="#b4b4b4"/><rect x="0.5" y="5.5" width="1.200" height="1.200" fill="#b4b4b4"/><rect x="5.5" y="3" width="1.200" height="1.200" fill="#b4b4b4"/><rect x="3" y="3" width="1.200" height="1.200" fill="#b4b4b4"/><rect x="5.5" y="0.5" width="1.200" height="1.200" fill="#b4b4b4"/></svg>
<div style="left:492px;top:7px;width:654px;height:425.8px;background:#fff;border:1px solid #7d7d7d;box-shadow:0 2px 14px 1px rgba(0,0,0,.38)"></div>
<svg style="left:498.5px;top:12px;" width="13" height="13.5" viewBox="0 0 13 13.5"><path d="M5 .6h7.400v5.800H5z" fill="#3a3ad0" stroke="#c9c9d9" stroke-width="1"/><path d="M.6 6h7.400v5.800H.6z" fill="#3a3ad0" stroke="#c9c9d9" stroke-width="1"/><path d="M0 12.300h9v1.200H0zM5.500 7h7.500v1H5.500z" fill="#9a9a9a"/><path d="M8.300 2.300 4.200 7.200h2.300L5.300 10.300 9.500 5.500H7.200z" fill="#f7e11a" stroke="#8a7a00" stroke-width=".3"/></svg>
<span style="left:514.00px;top:13.70px;font-size:9.9px;line-height:12px;color:#111;transform:scaleX(0.9287);">student11@anthriscus: ~/mme_2020</span>
<svg style="left:1049.5px;top:17.8px;" width="8" height="1.2" viewBox="0 0 8 1.2"><path d="M0 .6h8" stroke="#222" stroke-width="1"/></svg>
<svg style="left:1085px;top:14.8px;" width="8" height="8" viewBox="0 0 8 8"><path d="M.5.500h7v7h-7z" fill="none" stroke="#222" stroke-width="1"/></svg>
<svg style="left:1122px;top:14.8px;" width="8" height="8" viewBox="0 0 8 8"><path d="M.2.200 7.800 7.800M7.800.200.2 7.800" stroke="#222" stroke-width="1" fill="none"/></svg>
<div style="left:493px;top:30.7px;width:639px;height:401.1px;background:#000;"></div>
<div style="left:1132px;top:30.7px;width:13px;height:401.1px;background:#f4f4f4;"></div>
<div style="left:1132px;top:358px;width:13px;height:60.8px;background:#cdcdcd;"></div>
<svg style="left:1135.5px;top:36px;" width="6.5" height="4" viewBox="0 0 6.5 4"><path d="M.4 3.600 3.250.700 6.100 3.600" stroke="#333" stroke-width="1.200" fill="none"/></svg>
<svg style="left:1135.5px;top:423.5px;" width="6.5" height="4" viewBox="0 0 6.5 4"><path d="M.4.400 3.250 3.300 6.100.400" stroke="#333" stroke-width="1.200" fill="none"/></svg>
<pre style="left:494px;top:32.5px;width:638px;overflow:hidden;font-size:9.9px;letter-spacing:0.31px;line-height:12.5px;color:#b6b6b6">quiime: nie znaleziono polecenia
(qiime2-2020.2) <i style="color:#dc5c5c">student11</i><i style="color:#4646ee">@</i><i style="color:#cdcd55">anthriscus</i><i style="color:#4c4ce4">:</i><i style="color:#49c249">~/mme_2020</i><i style="color:#5858e6">$</i> ^C
(qiime2-2020.2) <i style="color:#dc5c5c">student11</i><i style="color:#4646ee">@</i><i style="color:#cdcd55">anthriscus</i><i style="color:#4c4ce4">:</i><i style="color:#49c249">~/mme_2020</i><i style="color:#5858e6">$</i> qiime tools import --type &#x27;SampleData[PairedEndSequen
ity]&#x27; --input-format PairedEndFastqManifestPhred33 --input-path mani3.csv --output-path classifier2020
Traceback (most recent call last):
  File &quot;/home/students/student1/miniconda3/envs/qiime2-2020.2/lib/python3.6/site-packages/q2cli/builti
&quot;, line 158, in import_data
    view_type=input_format)
  File &quot;/home/students/student1/miniconda3/envs/qiime2-2020.2/lib/python3.6/site-packages/qiime2/sdk/r
 line 241, in import_data
    validate_level=&#x27;max&#x27;)
  File &quot;/home/students/student1/miniconda3/envs/qiime2-2020.2/lib/python3.6/site-packages/qiime2/sdk/r
 line 255, in _from_view
    output_dir_fmt = pm.get_directory_format(type)
  File &quot;/home/students/student1/miniconda3/envs/qiime2-2020.2/lib/python3.6/site-packages/qiime2/sdk/p
ger.py&quot;, line 313, in get_directory_format
    % semantic_type)
TypeError: Semantic type SampleData[PairedEndSequencesWithQulity] does not have a compatible directory

<i style="color:#c04242">An unexpected error has occurred:</i>

<i style="color:#c04242">  Semantic type SampleData[PairedEndSequencesWithQulity] does not have a compatible directory format.</i>

<i style="color:#c04242">See above for debug info.</i>
(qiime2-2020.2) <i style="color:#dc5c5c">student11</i><i style="color:#4646ee">@</i><i style="color:#cdcd55">anthriscus</i><i style="color:#4c4ce4">:</i><i style="color:#49c249">~/mme_2020</i><i style="color:#5858e6">$</i> qiime tools import --type &#x27;SampleData[PairedEndSequen
lity]&#x27; --input-format PairedEndFastqManifestPhred33 --input-path mani3.csv --output-path classifier202
<i style="color:#2a9c2a">Imported mani3.csv as PairedEndFastqManifestPhred33 to classifier2020.qza</i>
(qiime2-2020.2) <i style="color:#dc5c5c">student11</i><i style="color:#4646ee">@</i><i style="color:#cdcd55">anthriscus</i><i style="color:#4c4ce4">:</i><i style="color:#49c249">~/mme_2020</i><i style="color:#5858e6">$</i> ls
classifier2020.qza  <i style="color:#4a55e4">data</i>  <i style="color:#45c045">mani3.csv</i>  <i style="color:#45c045">mapping_file3.tsv</i>
(qiime2-2020.2) <i style="color:#dc5c5c">student11</i><i style="color:#4646ee">@</i><i style="color:#cdcd55">anthriscus</i><i style="color:#4c4ce4">:</i><i style="color:#49c249">~/mme_2020</i><i style="color:#5858e6">$</i> qiime dada2 denoise-paired --i-demultiplexed-seqs cla
0.qza -- p-trunc-len-f 220 -ptrunc-len-r 220 --p-trim-left-f 15 --ptrim-left-r 20 --p-chimera-method c
-o-denoising-stats statystuki.qza --o-representative-sequences przefiltrowane.qza --otable tabela.qza</pre>
<div style="left:1125.2px;top:419px;width:6.4px;height:12.3px;background:#00e000;"></div>
<div style="left:0px;top:644px;width:1200px;height:31px;background:#27241f;"></div>
<svg style="left:11.8px;top:652.3px;" width="13.5" height="13.5" viewBox="0 0 13.5 13.5"><path d="M0 1.900 5.600 1.100V6.300H0zM6.400 1 13.500 0V6.300H6.400zM0 7.100H5.600V12.300L0 11.500zM6.400 7.100H13.500V13.500L6.400 12.500z" fill="#fff"/></svg>
<div style="left:37.5px;top:644px;width:268.5px;height:31px;background:#f3f3f3;border-top:1px solid #dcdcdc"></div>
<svg style="left:46.5px;top:652.5px;" width="13" height="13.5" viewBox="0 0 13 13.5"><circle cx="8.200" cy="5" r="4" fill="none" stroke="#2b2b2b" stroke-width="1.100"/><path d="M5.400 8 .6 12.800" stroke="#2b2b2b" stroke-width="1.200"/></svg>
<span style="left:69.00px;top:652.90px;font-size:11.8px;line-height:14px;color:#2b2b2b;transform:scaleX(0.9911);">Wpisz tu wyszukiwane słowa</span>
<svg style="left:317.5px;top:652.5px;" width="14" height="13" viewBox="0 0 14 13"><path d="M1.500 3.500h7v6h-7z" fill="none" stroke="#e8e8e8" stroke-width="1.200"/><path d="M.5.600h9M.5 12.400h9" stroke="#e8e8e8" stroke-width="1.100"/><path d="M12.300.300v12.400" stroke="#e8e8e8" stroke-width="1.100"/><circle cx="12.300" cy="4.800" r="1" fill="#fff"/></svg>
<svg style="left:356px;top:650.5px;" width="17" height="17" viewBox="0 0 17 17"><circle cx="8.500" cy="8.500" r="8.500" fill="#e8b730"/><path d="M8.500 8.500 1.140 4.250A8.500 8.500 0 0 1 15.860 4.250z" fill="#dc4a38"/><path d="M8.500 8.500 1.140 4.250A8.500 8.500 0 0 0 8.500 17z" fill="#2c9c4b"/><path d="M8.500 4.600h7.500" stroke="#dc4a38" stroke-width="1.500"/><circle cx="8.500" cy="8.500" r="3.900" fill="#f4f4f4"/><circle cx="8.500" cy="8.500" r="3" fill="#4a8af4"/></svg>
<svg style="left:394.5px;top:650px;" width="19" height="18" viewBox="0 0 19 18"><path d="M1 11C1 6 6 2 12 2c3 0 5-1 6.500-2 .500 4-.5 9-3.500 13-3 4-8 5.500-11 4C2 16 1 14 1 11z" fill="#e2334a"/><path d="M1.500 11c0-4 3.500-7 8-7 2 0 3.500.500 4.500 1.500-1 5-5 9-10 9.500C2.500 14.500 1.500 13 1.500 11z" fill="#f39a1c"/><circle cx="7.500" cy="10.500" r="3.900" fill="#e6472c"/><circle cx="7.500" cy="10.500" r="3.100" fill="#f6a81c"/><path d="M6.300 8.500 10 10.500 6.300 12.500z" fill="#7a2a10"/></svg>
<svg style="left:435px;top:652px;" width="15" height="15.5" viewBox="0 0 15 15.5"><path d="M1.500 0h12A1.500 1.500 0 0 1 15 1.500V15.500L11.500 13H1.500A1.500 1.500 0 0 1 0 11.500v-10A1.500 1.500 0 0 1 1.500 0z" fill="#7a8cd6"/><path d="M3 5c1.500-1.300 7.500-1.300 9 0 .8 1.500 1.200 3.300 1 5-1 .800-2 1-3 1l-.5-1h-4l-.5 1c-1 0-2-.200-3-1-.2-1.700.2-3.500 1-5z" fill="#fff"/><circle cx="5.700" cy="7.800" r="1.100" fill="#7a8cd6"/><circle cx="9.300" cy="7.800" r="1.100" fill="#7a8cd6"/></svg>
<svg style="left:471.5px;top:649.5px" width="19" height="19" viewBox="0 0 19 19"><circle cx="9.500" cy="9.500" r="9.500" fill="#78a6e0"/><text x="9.500" y="13.800" font-size="12" text-anchor="middle" fill="#fff" font-family="'Liberation Serif',serif">R</text></svg>
<svg style="left:510.5px;top:650.3px" width="18" height="17" viewBox="0 0 18 17"><path d="M.7.700h16.600v15.600H.7z" fill="#06202c" stroke="#1fa7cf" stroke-width="1.400"/><text x="9" y="12.300" font-size="9.500" font-weight="700" text-anchor="middle" fill="#35c3ee" font-family="'Liberation Sans',sans-serif">Ps</text></svg>
<svg style="left:550px;top:651.5px;" width="17.5" height="15" viewBox="0 0 17.5 15"><path d="M0 1h6l1.500 1.500H17.500V14H0z" fill="#e9b530"/><path d="M0 3.500h17.500V14H0z" fill="#f8d45c"/><path d="M3.500 8h10.500v6H3.500z" fill="#3f9be8"/><path d="M5.500 10h6.500v4H5.500z" fill="#f8d45c"/><path d="M3.500 8h10.500v1.500H3.500z" fill="#2a7fd0"/></svg>
<svg style="left:588px;top:650px" width="19" height="18" viewBox="0 0 19 18"><circle cx="10" cy="9" r="9" fill="#e0533a"/><path d="M10 0a9 9 0 0 1 9 9h-9z" fill="#f07a5c"/><path d="M10 18a9 9 0 0 0 9-9h-9z" fill="#c93c26"/><path d="M0 4.500h9.500v9H0z" fill="#c43e25"/><text x="4.700" y="12.300" font-size="8.500" font-weight="700" text-anchor="middle" fill="#fff" font-family="'Liberation Sans',sans-serif">P</text></svg>
<div style="left:617.5px;top:644px;width:38.2px;height:31px;background:#4d4a47;"></div>
<svg style="left:626.5px;top:650.5px;" width="20" height="18" viewBox="0 0 20 18"><path d="M10 .5h7.500v5.500H10z" fill="#2a2ad6" stroke="#e4e4f0" stroke-width="1"/><path d="M9 7h9.500l1 1.500H8z" fill="#cfcfd8"/><path d="M2 8.500h7.500V14H2z" fill="#2a2ad6" stroke="#e4e4f0" stroke-width="1"/><path d="M1 15h9.500l1 1.800H0z" fill="#cfcfd8"/><path d="M11 5.500 7.500 9.500h2L8.800 12l3.700-4h-2l1.500-2.500z" fill="#f4e21a"/></svg>
<svg style="left:665.8px;top:651px;" width="18.5" height="17.5" viewBox="0 0 18.5 17.5"><path d="M.3.300h7L.3 7.300z" fill="#2a72e0"/><path d="M6 8V5.500a3.300 3.300 0 0 1 6.600 0V8" fill="none" stroke="#9c9c9c" stroke-width="1.900"/><path d="M4 7.800h10.600v8H4z" fill="#5a5a5a"/><path d="M4 7.800h10.600v2H4z" fill="#757575"/><path d="M18.300 17.300h-7l7-7z" fill="#25c238"/></svg>
<svg style="left:703.8px;top:650.5px" width="19" height="17.500" viewBox="0 0 19 17.500"><path d="M5 0h13a1 1 0 0 1 1 1v15.500a1 1 0 0 1-1 1H5z" fill="#2b7cd3"/><path d="M5 0h14v4.400H5z" fill="#41a5ee"/><path d="M5 8.800h14v4.400H5z" fill="#185abd"/><path d="M5 13.100h14V16.500a1 1 0 0 1-1 1H5z" fill="#103f91"/><path d="M0 4h10v9.500H0z" fill="#185abd"/><text x="5" y="11.800" font-size="8" font-weight="700" text-anchor="middle" fill="#fff" font-family="'Liberation Sans',sans-serif">W</text></svg>
<div style="left:349px;top:673px;width:32px;height:2px;background:#dcc39a;"></div>
<div style="left:543px;top:673px;width:32px;height:2px;background:#dcc39a;"></div>
<div style="left:582px;top:673px;width:32px;height:2px;background:#dcc39a;"></div>
<div style="left:617.5px;top:673px;width:38.2px;height:2px;background:#dcc39a;"></div>
<div style="left:659px;top:673px;width:32px;height:2px;background:#dcc39a;"></div>
<div style="left:698px;top:673px;width:32px;height:2px;background:#dcc39a;"></div>
<svg style="left:1031.5px;top:657.5px;" width="8.5" height="5" viewBox="0 0 8.5 5"><path d="M.4 4.600 4.250.700 8.100 4.600" stroke="#fff" stroke-width="1" fill="none"/></svg>
<svg style="left:1048px;top:655.5px;" width="13.5" height="7.5" viewBox="0 0 13.5 7.5"><path d="M.5.500h11.500v6.500H.5z" fill="none" stroke="#fff" stroke-width="1"/><path d="M12.300 2.500h1.200v2.500h-1.200z" fill="#fff"/><path d="M1.500 1.500h4.500v4.500H1.500z" fill="#fff"/></svg>
<svg style="left:1068.5px;top:653.5px;" width="11" height="11" viewBox="0 0 11 11"><path d="M1 10a9 9 0 0 1 9-9" stroke="#8f8f8f" stroke-width="1" fill="none"/><path d="M3.500 10.300a6.500 6.500 0 0 1 6.500-6.500" stroke="#c9c9c9" stroke-width="1" fill="none"/><path d="M6 10.500a4 4 0 0 1 4-4" stroke="#fff" stroke-width="1" fill="none"/><circle cx="9.300" cy="9.800" r="1.100" fill="#fff"/></svg>
<svg style="left:1085px;top:654px;" width="13.5" height="10.5" viewBox="0 0 13.5 10.5"><path d="M.5 3.500h2.500L6 .800v9L3 7H.5z" fill="none" stroke="#fff" stroke-width=".9"/><path d="M8 3.500a2.500 2.500 0 0 1 0 3.500M9.800 2a4.800 4.800 0 0 1 0 6.500M11.600.600a7 7 0 0 1 0 9.300" stroke="#e0e0e0" stroke-width=".9" fill="none"/></svg>
<span style="left:1118.50px;top:646.90px;font-size:9.9px;line-height:12px;color:#fff;transform:scaleX(0.8738);">15:43</span>
<span style="left:1105.50px;top:661.10px;font-size:9.9px;line-height:12px;color:#fff;transform:scaleX(0.9522);">2020-05-22</span>
<svg style="left:1167.5px;top:652.5px" width="19" height="19" viewBox="0 0 19 19"><path d="M.5.500h12.500v9.500H6L3.500 12.500V10H.5z" fill="#fff"/><path d="M2.500 3h8.500M2.500 5.200h8.500M2.500 7.400h6" stroke="#27241f" stroke-width=".8"/><circle cx="13" cy="13.500" r="4.800" fill="#27241f" stroke="#d0d0d0" stroke-width=".9"/><text x="13" y="16.300" font-size="7.500" font-weight="700" text-anchor="middle" fill="#fff" font-family="'Liberation Sans',sans-serif">4</text></svg>
</body>
</html>
